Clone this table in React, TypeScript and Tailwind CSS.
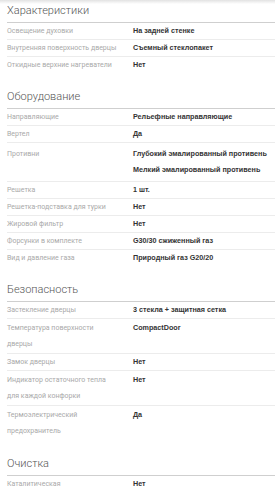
import React from "react";

type Row = { label: string; values: string[] };
type Section = { title: string; rows: Row[] };

// labels keep the same line breaks as the product card
const sections: Section[] = [
  {
    title: "Характеристики",
    rows: [
      { label: "Освещение духовки", values: ["На задней стенке"] },
      { label: "Внутренняя поверхность дверцы", values: ["Съемный стеклопакет"] },
      { label: "Откидные верхние нагреватели", values: ["Нет"] },
    ],
  },
  {
    title: "Оборудование",
    rows: [
      { label: "Направляющие", values: ["Рельефные направляющие"] },
      { label: "Вертел", values: ["Да"] },
      {
        label: "Противни",
        values: ["Глубокий эмалированный противень", "Мелкий эмалированный противень"],
      },
      { label: "Решетка", values: ["1 шт."] },
      { label: "Решетка-подставка для турки", values: ["Нет"] },
      { label: "Жировой фильтр", values: ["Нет"] },
      { label: "Форсунки в комплекте", values: ["G30/30 сжиженный газ"] },
      { label: "Вид и давление газа", values: ["Природный газ G20/20"] },
    ],
  },
  {
    title: "Безопасность",
    rows: [
      { label: "Застекление дверцы", values: ["3 стекла + защитная сетка"] },
      { label: "Температура поверхности\nдверцы", values: ["CompactDoor"] },
      { label: "Замок дверцы", values: ["Нет"] },
      { label: "Индикатор остаточного тепла\nдля каждой конфорки", values: ["Нет"] },
      { label: "Термоэлектрический\nпредохранитель", values: ["Да"] },
    ],
  },
  {
    title: "Очистка",
    rows: [{ label: "Каталитическая", values: ["Нет"] }],
  },
];

function SpecRow({ row, last }: { row: Row; last: boolean }) {
  const multi = row.values.length > 1;
  const tall = row.label.includes("\n");
  return (
    <div
      className={
        "flex " +
        (last ? "" : "border-b border-[#ececec] ") +
        (multi ? "py-[3px] " : tall ? "py-px " : "")
      }
    >
      <div className="w-[126px] shrink-0 whitespace-pre-line font-[Roboto,sans-serif] text-[7px] leading-4 text-[#a9a9a9]">
        {row.label}
      </div>
      <div className="flex flex-col text-[7.2px] leading-4 font-bold text-[#333] whitespace-nowrap">
        {row.values.map((v) => (
          <div key={v}>{v}</div>
        ))}
      </div>
    </div>
  );
}

export default function App() {
  return (
    <div className="w-[275px] h-[499px] overflow-hidden bg-white bg-[linear-gradient(to_bottom,#e2e2e2,#ffffff_4px)] pt-[2px] pl-[7px] flex flex-col gap-[15px] font-['Liberation_Sans',Arial,sans-serif]">
      {sections.map((s) => (
        <div key={s.title}>
          <div className="pt-px pb-[3px] leading-4 text-[11px] font-light font-[Roboto,sans-serif] text-[#555] border-b border-[#cfcfcf]">
            {s.title}
          </div>
          {s.rows.map((r, i) => (
            <SpecRow key={r.label} row={r} last={i === s.rows.length - 1} />
          ))}
        </div>
      ))}
    </div>
  );
}
